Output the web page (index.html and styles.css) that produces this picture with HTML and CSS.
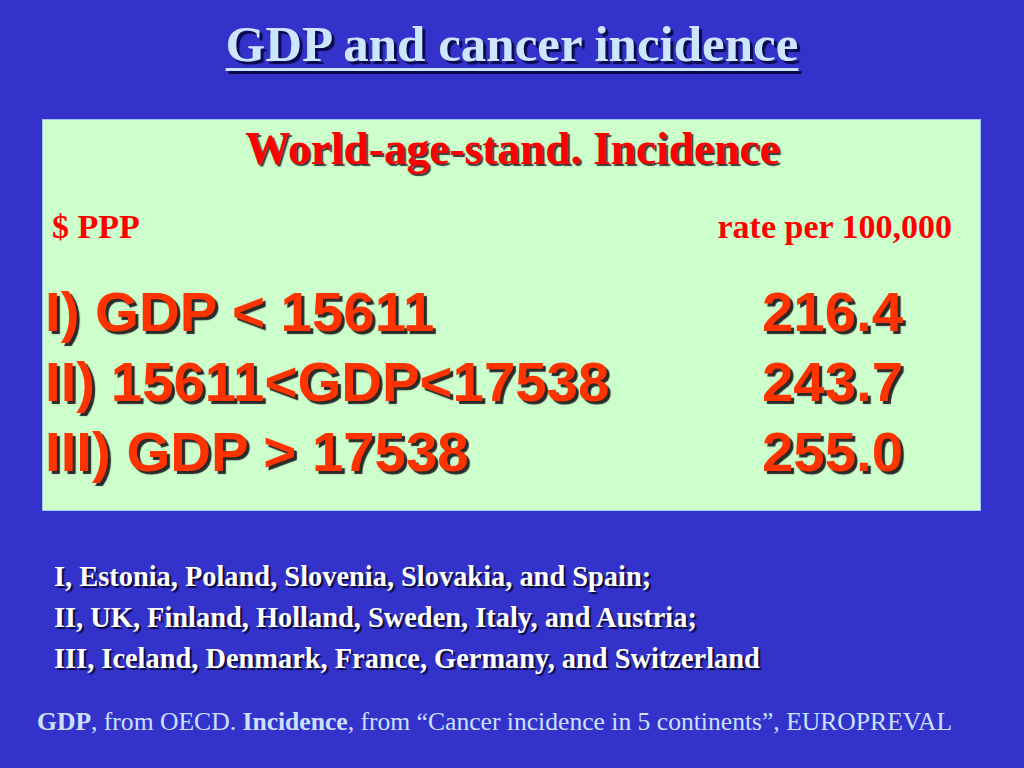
FILE: index.html
```html
<!DOCTYPE html>
<html lang="en">
<head>
<meta charset="utf-8">
<title>GDP and cancer incidence</title>
<link rel="stylesheet" href="styles.css">
</head>
<body>
<div class="slide">
  <h1 class="title">GDP and cancer incidence</h1>
  <section class="panel">
    <h2 class="panel-head">World-age-stand. Incidence</h2>
    <div class="units">
      <span>$ PPP</span>
      <span>rate per 100,000</span>
    </div>
    <div class="rows">
      <div class="label">I) GDP &lt; 15611</div><div class="value">216.4</div>
      <div class="label">II) 15611&lt;GDP&lt;17538</div><div class="value">243.7</div>
      <div class="label">III) GDP &gt; 17538</div><div class="value">255.0</div>
    </div>
  </section>
  <ul class="groups">
    <li>I, Estonia, Poland, Slovenia, Slovakia, and Spain;</li>
    <li>II, UK, Finland, Holland, Sweden, Italy, and Austria;</li>
    <li>III, Iceland, Denmark, France, Germany, and Switzerland</li>
  </ul>
  <p class="source"><b>GDP</b>, from OECD. <b>Incidence</b>, from “Cancer incidence in 5 continents”, EUROPREVAL</p>
</div>
</body>
</html>
```

FILE: styles.css
```css
html, body {
  margin: 0;
  padding: 0;
}

body {
  background: #3333cc;
  width: 1024px;
  height: 768px;
  overflow: hidden;
  font-family: "Liberation Serif", "Times New Roman", serif;
}

.slide {
  display: flex;
  flex-direction: column;
  padding-top: 14px;
}

.title {
  margin: 0;
  text-align: center;
  font-size: 51px;
  line-height: 60px;
  font-weight: bold;
  color: #cce6ff;
  text-decoration: underline;
  text-decoration-thickness: 3px;
  text-underline-offset: 7px;
  text-shadow: 3px 3px 1px #0a0a4a;
}

.panel {
  box-sizing: border-box;
  margin: 45px 0 0 42px;
  width: 939px;
  height: 392px;
  background: #ccffcc;
  border: 1px solid #9ec8f0;
  padding: 2px 0 0 0;
  display: flex;
  flex-direction: column;
}

.panel-head {
  margin: 0;
  text-align: center;
  font-size: 45.4px;
  line-height: 54px;
  font-weight: bold;
  color: #ff0000;
  text-shadow: 2px 2px 1px #3a3a3a;
  padding-left: 2px;
}

.units {
  display: flex;
  justify-content: space-between;
  margin-top: 31px;
  padding: 0 28px 0 9px;
  font-size: 34px;
  line-height: 40px;
  font-weight: bold;
  color: #ff0000;
}

.rows {
  display: grid;
  grid-template-columns: 717px auto;
  margin-top: 30px;
  padding-left: 2px;
  font-family: "Liberation Sans", Arial, sans-serif;
  font-weight: bold;
  font-size: 56.4px;
  line-height: 70px;
  color: #ff3300;
  text-shadow: 3px 3px 1px #2a2a2a;
  white-space: nowrap;
}

.groups {
  list-style: none;
  margin: 45px 0 0 54px;
  padding: 0;
  font-size: 28.4px;
  line-height: 41px;
  font-weight: bold;
  color: #ffffff;
  text-shadow: 2px 2px 1px #0a0a3a;
}

.source {
  margin: 28px 0 0 37px;
  font-size: 25.6px;
  line-height: 30px;
  color: #cce0ff;
  white-space: nowrap;
}
```
